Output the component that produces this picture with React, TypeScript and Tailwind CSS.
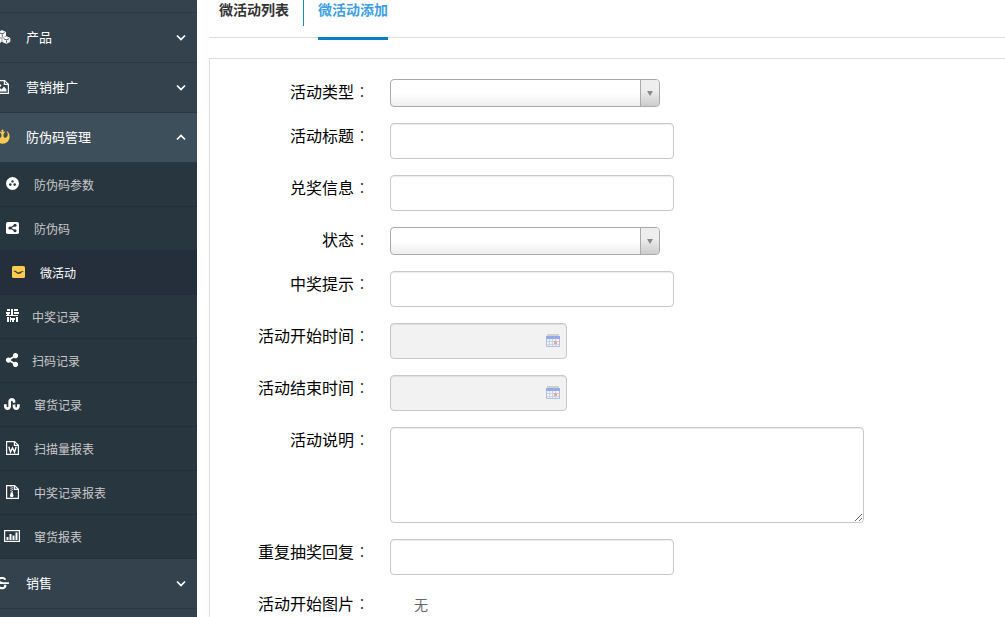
import { useState, type ReactNode } from "react";
import clsx from "clsx";
import { FaRebel, FaShareAlt, FaStrikethrough, FaStumbleupon } from "react-icons/fa";

function CubesIcon() {
  return (
    <svg width="18" height="14" viewBox="0 0 18 14" className="shrink-0" aria-hidden="true">
      <g fill="currentColor" stroke="currentColor" strokeLinejoin="round">
        <path d="M9 .7 12.500 2.200v3.600L9 7.300 5.500 5.800V2.200z" />
        <path d="M4.700 6.700 8.200 8.200v3.600l-3.500 1.500-3.500-1.500V8.200z" />
        <path d="M13.300 6.700l3.500 1.500v3.600l-3.500 1.500-3.500-1.500V8.200z" />
      </g>
      <g fill="none" stroke="#34424e" strokeWidth=".9">
        <path d="M6.300 2.700 9 3.900l2.700-1.200M9.300 4.500v2.200" />
        <path d="M2 8.700l2.700 1.200 2.700-1.200M5 10.500v2.200" />
        <path d="M10.600 8.700l2.700 1.200L16 8.700M13.600 10.500v2.200" />
      </g>
    </svg>
  );
}

function FileIcon({ children }: { children: ReactNode }) {
  return (
    <svg
      width="13"
      height="14"
      viewBox="0 0 13 14"
      fill="none"
      stroke="currentColor"
      strokeWidth="1.2"
      aria-hidden="true"
    >
      <path d="M.6.6h8l3.800 3.600v9.200H.6z" />
      <path d="M8.400.8v3.600h3.800" />
      {children}
    </svg>
  );
}

function ShareSquareIcon() {
  return (
    <svg width="13" height="12" viewBox="0 0 13 12" aria-hidden="true">
      <rect width="13" height="12" rx="1.8" fill="currentColor" />
      <path d="M9 3.300 4.200 6 9 8.800" fill="none" stroke="#283640" strokeWidth="1.1" />
      <g fill="#283640">
        <circle cx="9" cy="3.300" r="1.500" />
        <circle cx="4" cy="6" r="1.600" />
        <circle cx="9" cy="8.800" r="1.500" />
      </g>
    </svg>
  );
}

function DotsCircleIcon() {
  return (
    <svg width="13" height="13" viewBox="0 0 13 13" aria-hidden="true">
      <circle cx="6.5" cy="6.5" r="6.5" fill="currentColor" />
      <g fill="#283640">
        <circle cx="6.5" cy="4.4" r="1.2" />
        <circle cx="4.3" cy="7.6" r="1.3" />
        <circle cx="8.7" cy="7.6" r="1.3" />
      </g>
    </svg>
  );
}

function SwooshSquareIcon() {
  return (
    <svg width="13" height="12" viewBox="0 0 13 12" aria-hidden="true">
      <rect width="13" height="12" rx="1.6" fill="currentColor" />
      <path
        d="M1.200 4.900C3 4.600 4.200 5.200 5.200 6c.9.6 1.800.6 2.600 0C9 5.200 10.200 4.900 12 4.900c-1.500.6-2.300 1.400-3.300 2.300-1.200 1-2.700 1-3.900 0C3.700 6.100 2.700 5.500 1.200 4.900z"
        fill="#3a3a34"
      />
    </svg>
  );
}

function LatticeIcon() {
  return (
    <svg width="13" height="13" viewBox="0 0 13 13" fill="currentColor" aria-hidden="true">
      <path d="M1 0h3v2H1zM5 0h2v7H5zM8 0h4v2H8zM0 3h4v2H0zM8 3h5v2H8zM1 5h2v2H1zM0 6h7v1H0zM7 6h5v1H7zM1 8h2v5H1zM4 8h1v5H4zM5 9h4v2H5zM6 11h2v2H6zM10 8h2v5h-2z" />
    </svg>
  );
}

function BarChartIcon() {
  return (
    <svg width="16" height="12" viewBox="0 0 16 12" aria-hidden="true">
      <rect x=".6" y=".6" width="14.800" height="10.800" fill="none" stroke="currentColor" strokeWidth="1.200" />
      <path d="M2.500 7h2v3h-2zM5.500 4h2v6h-2zM8.500 5.500h2V10h-2zM11.500 2.500h2V10h-2z" fill="currentColor" />
    </svg>
  );
}

function CalendarIcon() {
  return (
    <svg width="14" height="13" viewBox="0 0 14 13" aria-hidden="true">
      <rect x="1" width="12" height="2" fill="#d0d0cc" />
      <rect y="2" width="14" height="11" fill="#b4c1d8" />
      <rect y="2" width="14" height="3" fill="#93adea" />
      <rect x="1" y="5" width="12" height="7" fill="#edf2fb" />
      <path d="M3.500 5v7M6.500 5v7M9.500 5v7M1 7.500h12M1 10.500h12" stroke="#c6d3ec" fill="none" />
      <rect x="8" y="7" width="3" height="3" fill="#f3a491" />
    </svg>
  );
}

function Chevron({ up }: { up?: boolean }) {
  return (
    <svg
      width="10"
      height="7"
      viewBox="0 0 10 7"
      fill="none"
      stroke="currentColor"
      strokeWidth="1.7"
      aria-hidden="true"
    >
      <path d={up ? "M1 5.500 5 1.500l4 4" : "M1 1.500l4 4 4-4"} />
    </svg>
  );
}

const subItems = [
  { label: "防伪码参数", icon: <DotsCircleIcon /> },
  { label: "防伪码", icon: <ShareSquareIcon /> },
  { label: "微活动", icon: <SwooshSquareIcon /> },
  { label: "中奖记录", icon: <LatticeIcon />, tight: true },
  { label: "扫码记录", icon: <FaShareAlt size={14} />, tight: true },
  { label: "窜货记录", icon: <FaStumbleupon size={16} /> },
  {
    label: "扫描量报表",
    icon: (
      <FileIcon>
        <path d="M2.800 5.800 4.500 11 6.500 6.800 8.500 11l1.700-5.200" strokeWidth="1.400" />
      </FileIcon>
    ),
  },
  {
    label: "中奖记录报表",
    icon: (
      <FileIcon>
        <path d="M5 1.200v6M6.300 2.200v5" strokeDasharray="1 1" />
        <path d="M4.800 7.200h1.800l.9 3.600c0 1.600-3.600 1.600-3.600 0z" fill="currentColor" stroke="none" />
      </FileIcon>
    ),
  },
  { label: "窜货报表", icon: <BarChartIcon /> },
];

type SectionProps = {
  label: string;
  icon: ReactNode;
  open?: boolean;
  onClick?: () => void;
};

function Section({ label, icon, open, onClick }: SectionProps) {
  return (
    <button
      type="button"
      aria-expanded={!!open}
      onClick={onClick}
      className={clsx(
        "flex h-[50px] w-full shrink-0 items-center gap-4 border-b border-[#2c3943] pr-[11px] text-[13px] text-white",
        open && "bg-[#3e4f5c]"
      )}
    >
      <span
        className={clsx("-ml-1.5 flex w-4 shrink-0 justify-center pb-0.5", open && "text-[#fccb4f]")}
      >
        {icon}
      </span>
      <span className="flex-1 pb-0.5 text-left">{label}</span>
      <Chevron up={open} />
    </button>
  );
}

function Sidebar() {
  const [open, setOpen] = useState(true);
  const [active, setActive] = useState("微活动");

  return (
    <nav className="flex w-[197px] shrink-0 flex-col overflow-hidden bg-[#34424e]">
      <div className="h-[13px] border-b border-[#2c3943]" />
      <Section label="产品" icon={<CubesIcon />} />
      <Section
        label="营销推广"
        icon={
          <FileIcon>
            <path d="M2.500 11.500V9.500l1.500-1.500 1.500 1.500 2.500-3 2.500 3v2z" fill="currentColor" stroke="none" />
            <circle cx="4" cy="5.500" r="1.200" fill="currentColor" stroke="none" />
          </FileIcon>
        }
      />
      <Section
        label="防伪码管理"
        icon={<FaRebel size={15} />}
        open={open}
        onClick={() => setOpen(!open)}
      />
      {open ? (
        <ul className="bg-[#283640]">
          {subItems.map((item) => {
            const current = item.label === active;
            return (
              <li key={item.label}>
                <a
                  href="#"
                  aria-current={current ? "page" : undefined}
                  onClick={() => setActive(item.label)}
                  className={clsx(
                    "flex h-11 items-center border-b border-[#222f38] text-xs",
                    item.tight ? "gap-3" : "gap-[14px]",
                    current ? "bg-[#242f3b] pl-[10px] text-white" : "pl-1 text-[#c8c8c8]"
                  )}
                >
                  <span
                    className={clsx(
                      "flex w-4 shrink-0 justify-center pb-0.5",
                      current ? "text-[#fccb4f]" : "text-white"
                    )}
                  >
                    {item.icon}
                  </span>
                  {item.label}
                </a>
              </li>
            );
          })}
        </ul>
      ) : null}
      <Section label="销售" icon={<FaStrikethrough size={14} />} />
    </nav>
  );
}

const fieldClass =
  "block rounded border border-[#c8c8c8] px-3 text-sm text-[#555] shadow-[inset_0_1px_1px_rgba(0,0,0,0.075)] outline-none";

function Row({ id, label, children }: { id: string; label: string; children: ReactNode }) {
  return (
    <div className="flex items-start gap-5">
      <label htmlFor={id} className="w-40 shrink-0 text-right text-base leading-6 text-black">
        {label}
        <span className="font-['Noto_Sans_CJK_TC',sans-serif] font-light text-[#333]">：</span>
      </label>
      {children}
    </div>
  );
}

function TextRow({ id, label }: { id: string; label: string }) {
  return (
    <Row id={id} label={label}>
      <input id={id} type="text" className={clsx(fieldClass, "h-9 w-[284px] bg-white")} />
    </Row>
  );
}

function SelectRow({ id, label }: { id: string; label: string }) {
  return (
    <Row id={id} label={label}>
      <div className="relative w-[270px]">
        <select
          id={id}
          className="block h-7 w-full appearance-none rounded border border-[#aaa] bg-linear-to-t from-[#eee] to-white to-50% pr-6 pl-2 text-sm text-[#444] outline-none"
        >
          <option value="" />
        </select>
        <span className="pointer-events-none absolute inset-y-px right-px flex w-[19px] items-center justify-center rounded-r-[3px] border-l border-[#aaa] bg-linear-to-t from-[#ccc] to-[#eee] to-60% pr-px">
          <svg width="6" height="5" viewBox="0 0 6 5" className="mt-px" aria-hidden="true">
            <path d="M0 0h6L3 5z" fill="#888" />
          </svg>
        </span>
      </div>
    </Row>
  );
}

function DateRow({ id, label }: { id: string; label: string }) {
  return (
    <Row id={id} label={label}>
      <div className="relative w-[177px]">
        <input id={id} type="text" readOnly className={clsx(fieldClass, "h-9 w-full bg-[#f2f2f2]")} />
        <button
          type="button"
          aria-label={`选择${label}`}
          className="absolute inset-y-0 right-[7px] flex items-center pb-px"
        >
          <CalendarIcon />
        </button>
      </div>
    </Row>
  );
}

export default function App() {
  return (
    <div className="flex min-h-screen bg-white font-['Noto_Sans_CJK_SC',sans-serif]">
      <Sidebar />
      <main className="min-w-0 flex-1 pl-3">
        <div className="flex h-[38px] items-start border-b border-[#ddd] text-sm leading-[18px] font-bold">
          <a href="#" className="ml-[10px] text-[#333]">
            微活动列表
          </a>
          <span className="ml-[14px] h-[26px] w-px bg-[#1a8fc0]" />
          <a
            href="#"
            aria-current="page"
            className="ml-[14px] h-10 border-b-3 border-[#0a7bc8] text-[#3a9fe5]"
          >
            微活动添加
          </a>
        </div>

        <form className="mt-5 flex flex-col gap-4 border-t border-l border-[#ddd] pt-5">
          <SelectRow id="type" label="活动类型" />
          <TextRow id="title" label="活动标题" />
          <TextRow id="prize" label="兑奖信息" />
          <SelectRow id="status" label="状态" />
          <TextRow id="tip" label="中奖提示" />
          <DateRow id="start" label="活动开始时间" />
          <DateRow id="end" label="活动结束时间" />
          <Row id="desc" label="活动说明">
            <textarea id="desc" className={clsx(fieldClass, "h-24 w-[474px] bg-white py-1.5")} />
          </Row>
          <TextRow id="repeat" label="重复抽奖回复" />
          <Row id="image" label="活动开始图片">
            <output id="image" className="pl-6 text-sm leading-[26px] text-[#666]">
              无
            </output>
          </Row>
        </form>
      </main>
    </div>
  );
}
